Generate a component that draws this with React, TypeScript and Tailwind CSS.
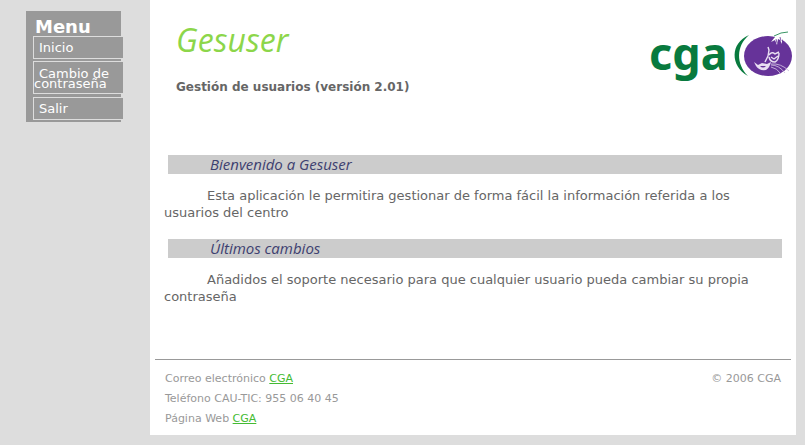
import React from 'react';

const bodyFont = "font-['DejaVu_Sans',Verdana,sans-serif]";
const titleFont = "font-['Open_Sans','Trebuchet_MS',sans-serif]";

function Logo() {
  return (
    <svg viewBox="0 0 145 60" className="h-[60px] w-[145px] overflow-visible" role="img" aria-label="CGA">
      <text x="-1" y="42" fill="#087a3e" fontSize="45" fontWeight="700" fontFamily="'Noto Sans', sans-serif">
        cga
      </text>
      <path d="M99 7 C80 15 80 38 98 48 C86 36 86 18 99 7Z" fill="#087a3e" />
      <ellipse cx="118" cy="28" rx="24" ry="20" fill="#663399" />
      <path d="M121 14 L125 9 L129 6 L136 3 L132 7 L132 16 L130 12 L128 11 L127 17 L125 12Z" fill="#fff" />
      <path d="M126 11 L127 15 M130 9 L131 13" stroke="#663399" strokeWidth="0.8" fill="none" />
      <path d="M124 8 Q131 4 138 4" stroke="#087a3e" strokeWidth="0.8" fill="none" />
      <path
        d="M118 19 L119 22 L118 28 L115 34 M119 27 Q122 23 125 26 L129 24 M119 29 Q120 34 125 34 Q129 32 129 25 M121 29 L124 31 L128 28"
        stroke="#e9dff2"
        strokeWidth="1.4"
        fill="none"
      />
      <path d="M104 34 L108 37 L112 35 L117 36 L121 34 Q120 39 116 42 Q109 43 106 38Z" fill="#e9dff2" />
      <path d="M110 38 Q113 41 116 38Z" fill="#663399" />
      <path d="M121 36 Q131 35 139 43 M121 37 Q129 37 135 45 M121 39 Q127 40 131 46" stroke="#cdbbdf" strokeWidth="0.9" fill="none" />
    </svg>
  );
}

function MenuItem({ children, className }: { children: React.ReactNode; className: string }) {
  return (
    <li className={'-mr-[3px] border border-[#dddddd] bg-[#999999] indent-[5px] ' + className}>
      <a href="#" className="block">{children}</a>
    </li>
  );
}

function Section({ title, children }: { title: string; children: React.ReactNode }) {
  return (
    <section className="mb-[18px]">
      <h3 className={titleFont + ' ml-1 bg-[#cccccc] pl-[42px] text-[15px] leading-[19px] italic text-[#3d4070]'}>{title}</h3>
      <p className="mt-[13px] indent-[43px] text-[13px] leading-[17px]">{children}</p>
    </section>
  );
}

export default function App() {
  return (
    <div className={bodyFont + ' flex min-h-screen items-start bg-[#dddddd] pr-[9px] pb-[10px] text-[#666666]'}>
      <aside className="w-[150px] shrink-0 pt-[11px] pl-[26px]">
        <nav aria-label="Menu" className="w-[95px] bg-[#999999] pt-[7px] pb-[2px] pl-[7px] text-white">
          <h2 className="pl-[2px] text-[18px] leading-[18px] font-bold">Menu</h2>
          <ul className="text-[13px]">
            <MenuItem className="mb-[2px] leading-[21px]">Inicio</MenuItem>
            <MenuItem className="mb-[3px] pt-[7px] pb-[4px] leading-[10px]">Cambio de contraseña</MenuItem>
            <MenuItem className="leading-[21px]">Salir</MenuItem>
          </ul>
        </nav>
      </aside>
      <div className="min-w-0 flex-1 bg-white pb-[6px]">
        <header className="flex items-start justify-between pr-[1px] pl-[26px]">
          <div>
            <h1 className={titleFont + ' mt-[19px] text-[32px] leading-[42px] italic text-[#8cd64a]'}>Gesuser</h1>
            <p className="mt-[17px] text-[12px] leading-[18px] font-bold">Gestión de usuarios (versión 2.01)</p>
          </div>
          <div className="mt-[28px]">
            <Logo />
          </div>
        </header>
        <main className="mt-[59px] px-[14px]">
          <Section title="Bienvenido a Gesuser">
            Esta aplicación le permitira gestionar de forma fácil la información referida a los usuarios del centro
          </Section>
          <Section title="Últimos cambios">
            Añadidos el soporte necesario para que cualquier usuario pueda cambiar su propia contraseña
          </Section>
        </main>
        <footer className="mx-[5px] mt-[54px] flex justify-between border-t border-[#999999] px-[10px] pt-[9px] text-[11px] leading-[20px] text-[#999999]">
          <div>
            <p>Correo electrónico <a href="#" className="text-[#44bb33] underline">CGA</a></p>
            <p>Teléfono CAU-TIC: 955 06 40 45</p>
            <p>Página Web <a href="#" className="text-[#44bb33] underline">CGA</a></p>
          </div>
          <p>© 2006 CGA</p>
        </footer>
      </div>
    </div>
  );
}
